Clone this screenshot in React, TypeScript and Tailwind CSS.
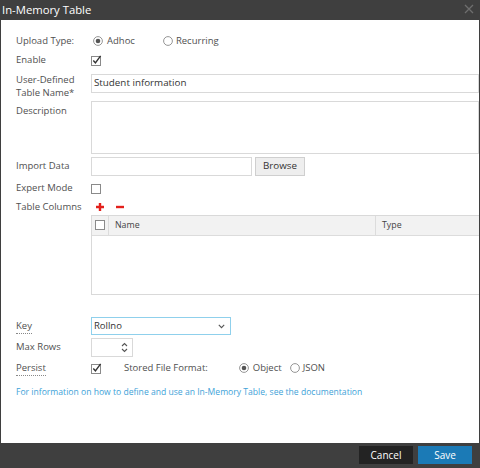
import React from "react";

const Check = () => (
  <svg width="11" height="11" viewBox="0 0 11 11" className="block">
    <rect x="0.5" y="1.5" width="9" height="9" fill="#fff" stroke="#8a8a8a" />
    <path d="M2.3 5.6 L4.4 7.8 L9.6 0.8" fill="none" stroke="#333" strokeWidth="1.4" />
  </svg>
);

const Box = () => (
  <svg width="11" height="11" viewBox="0 0 11 11" className="block">
    <rect x="0.5" y="1.5" width="9" height="9" fill="#fff" stroke="#8a8a8a" />
  </svg>
);

const Radio = ({ on }: { on?: boolean }) => (
  <svg width="10" height="10" viewBox="0 0 10 10" className="block">
    <circle cx="5" cy="5" r="4.4" fill="#fff" stroke="#8a8a8a" strokeWidth="0.9" />
    {on && <circle cx="5" cy="5" r="2.3" fill="#555" />}
  </svg>
);

const Label = ({ children, dotted }: { children: React.ReactNode; dotted?: boolean }) => (
  <div className="w-[75px] shrink-0 whitespace-nowrap">
    <span className={dotted ? "border-b border-dotted border-[#888] pb-[1px]" : ""}>{children}</span>
  </div>
);

export default function App() {
  return (
    <div
      className="w-[480px] h-[468px] bg-[#3f3f3f] flex flex-col text-[9.5px] text-[#505050]"
      style={{ fontFamily: '"Open Sans", "Liberation Sans", sans-serif' }}
    >
      <div className="h-[20px] flex items-center justify-between pl-[2px] pr-[6px]">
        <span className="text-[11.3px] text-white leading-none">In-Memory Table</span>
        <svg width="10" height="10" viewBox="0 0 10 10" className="block mb-[2px]">
          <path d="M1 1 L9 9 M9 1 L1 9" stroke="#6e6e6e" strokeWidth="1.3" />
        </svg>
      </div>
      <div className="mx-[1px] h-[423px] bg-white overflow-hidden pl-[15px] pt-[12px]">
        {/* Upload type */}
        <div className="flex items-center h-[18px]">
          <Label>Upload Type:</Label>
          <div className="flex items-center ml-[2px]">
            <Radio on />
            <span className="ml-[4px]">Adhoc</span>
          </div>
          <div className="flex items-center ml-[28px]">
            <Radio />
            <span className="ml-[3px]">Recurring</span>
          </div>
        </div>
        {/* Enable */}
        <div className="flex items-center h-[18px] mt-[1px]">
          <Label>Enable</Label>
          <Check />
        </div>
        {/* Table name */}
        <div className="flex mt-[4px] h-[26px]">
          <div className="w-[75px] shrink-0 leading-[13px] whitespace-nowrap">
            User-Defined
            <br />
            Table Name*
          </div>
          <div className="mt-[1px] h-[19px] w-[400px] border border-[#d9d9d9] flex items-center pl-[2px] text-[#333] text-[9.8px]">
            Student information
          </div>
        </div>
        {/* Description */}
        <div className="flex mt-[2px]">
          <div className="w-[75px] shrink-0 leading-[13px] pt-[3px]">Description</div>
          <div className="h-[53px] w-[400px] border border-[#d9d9d9]" />
        </div>
        {/* Import */}
        <div className="flex items-center mt-[3px]">
          <Label>Import Data</Label>
          <div className="h-[19px] w-[161px] border border-[#d9d9d9]" />
          <div className="ml-[3px] h-[19px] w-[50px] border border-[#cfcfcf] bg-[#eeeeee] flex items-center justify-center text-[#333] text-[9.8px]">
            Browse
          </div>
        </div>
        {/* Expert */}
        <div className="flex items-center h-[18px] mt-[3px]">
          <Label>Expert Mode</Label>
          <Box />
        </div>
        {/* Table columns */}
        <div className="flex items-center h-[16px] mt-[2px]">
          <Label>Table Columns</Label>
          <svg width="10" height="10" viewBox="0 0 10 10" className="block ml-[4px]">
            <path d="M5 1 V9 M1 5 H9" stroke="#e3201b" strokeWidth="2.4" />
          </svg>
          <svg width="10" height="10" viewBox="0 0 10 10" className="block ml-[10px]">
            <path d="M1 5 H9" stroke="#e3201b" strokeWidth="2.4" />
          </svg>
        </div>
        {/* Table */}
        <div className="flex">
          <div className="w-[75px] shrink-0" />
          <div className="w-[400px] h-[80px] border border-[#d9d9d9] border-r-0">
            <div className="h-[20px] bg-[#f2f2f2] border-b border-[#dcdcdc] flex items-stretch text-[#444] text-[8.8px]">
              <div className="w-[17px] border-r border-[#dcdcdc] flex items-start justify-center pt-[3px]">
                <Box />
              </div>
              <div className="w-[267px] border-r border-[#dcdcdc] flex items-center pl-[6px]">Name</div>
              <div className="flex items-center pl-[6px]">Type</div>
            </div>
          </div>
        </div>
        {/* Key */}
        <div className="flex items-center mt-[22px]">
          <Label dotted>Key</Label>
          <div className="h-[18px] w-[140px] border border-[#8fd0ec] flex items-center justify-between pl-[2px] pr-[5px] text-[#333]">
            <span>Rollno</span>
            <svg width="7" height="5" viewBox="0 0 7 5" className="block">
              <path d="M0.8 0.8 L3.5 3.6 L6.2 0.8" fill="none" stroke="#555" strokeWidth="1.1" />
            </svg>
          </div>
        </div>
        {/* Max rows */}
        <div className="flex items-center mt-[3px]">
          <Label>Max Rows</Label>
          <div className="h-[19px] w-[42px] border border-[#d9d9d9] flex items-center justify-end pr-[4px]">
            <svg width="7" height="11" viewBox="0 0 7 11" className="block">
              <path d="M1 4 L3.5 1.5 L6 4 M1 7 L3.5 9.5 L6 7" fill="none" stroke="#555" strokeWidth="1.1" />
            </svg>
          </div>
        </div>
        {/* Persist */}
        <div className="flex items-center h-[18px] mt-[2px]">
          <Label dotted>Persist</Label>
          <Check />
          <span className="ml-[22px]">Stored File Format:</span>
          <div className="flex items-center ml-[31px]">
            <Radio on />
            <span className="ml-[4px]">Object</span>
          </div>
          <div className="flex items-center ml-[8px]">
            <Radio />
            <span className="ml-[3px]">JSON</span>
          </div>
        </div>
        {/* Link */}
        <div className="mt-[8px] h-[14px] flex items-center text-[#3ea2d8] text-[8.6px]">
          For information on how to define and use an In-Memory Table, see the documentation
        </div>
      </div>
      <div className="flex-1 flex items-start justify-end pt-[3px] pr-[8px] gap-[5px] text-[10px]">
        <div className="w-[54px] h-[18px] bg-[#232323] text-white flex items-center justify-center">Cancel</div>
        <div className="w-[54px] h-[18px] bg-[#1b7ab6] text-white flex items-center justify-center">Save</div>
      </div>
    </div>
  );
}
